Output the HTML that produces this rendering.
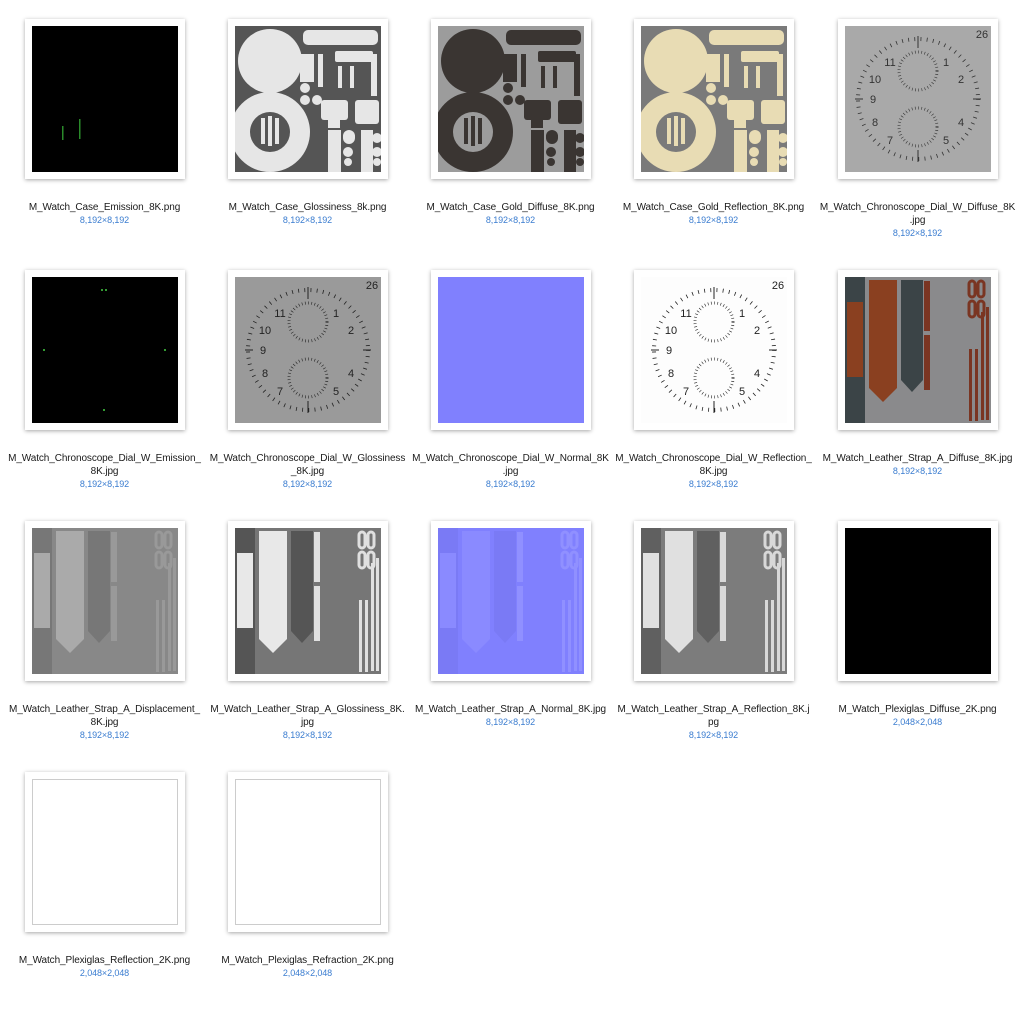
<!DOCTYPE html>
<html><head><meta charset="utf-8"><style>
body{margin:0;width:1024px;height:1024px;background:#fff;position:relative;overflow:hidden;font-family:"Liberation Sans",sans-serif}
.f{position:absolute;width:160px;height:160px;background:#fff;box-shadow:0 1px 4px rgba(0,0,0,.35)}
.f svg{position:absolute;left:7px;top:7px;width:146px;height:146px;display:block}
.l{position:absolute;width:203px;text-align:center;font-size:10px;line-height:13px;color:#1a1a1a;letter-spacing:-0.1px}
.l span{display:block;color:#3b7dd0;font-size:9px;line-height:12px}
</style></head><body>
<svg width="0" height="0" style="position:absolute">
<defs>
<symbol id="case" viewBox="0 0 146 146">
<circle cx="35" cy="35" r="32"/>
<path fill-rule="evenodd" d="M-5,106a40,40 0 1,0 80,0a40,40 0 1,0 -80,0zM15,106a20,20 0 1,0 40,0a20,20 0 1,0 -40,0z"/>
<rect x="26" y="92" width="4" height="26"/><rect x="33" y="90" width="4" height="30"/><rect x="40" y="92" width="4" height="26"/>
<rect x="68" y="4" width="75" height="15" rx="5"/><rect x="100" y="25" width="38" height="11" rx="2"/>
<rect x="65" y="28" width="14" height="28"/><rect x="83" y="28" width="5" height="33"/>
<circle cx="70" cy="62" r="5"/><circle cx="70" cy="74" r="5"/><circle cx="82" cy="74" r="5"/>
<rect x="115" y="40" width="4" height="22"/><rect x="103" y="40" width="4" height="22"/>
<rect x="136" y="28" width="6" height="42"/>
<rect x="86" y="74" width="27" height="20" rx="3"/><rect x="93" y="90" width="12" height="12"/>
<rect x="120" y="74" width="24" height="24" rx="3"/>
<rect x="93" y="104" width="13" height="42"/><rect x="108" y="104" width="12" height="14" rx="6"/><circle cx="113" cy="126" r="5"/><circle cx="113" cy="136" r="4"/>
<rect x="126" y="104" width="12" height="42"/><circle cx="142" cy="112" r="5"/><circle cx="142" cy="126" r="5"/><circle cx="142" cy="136" r="4"/>
</symbol>
<symbol id="strap" viewBox="0 0 146 146">
<rect x="0" y="0" width="20" height="146" fill="var(--a)"/>
<rect x="2" y="25" width="16" height="75" fill="var(--b)"/>
<path d="M24,3h28v108l-14,14l-14,-14z" fill="var(--b)"/>
<path d="M56,3h22v100l-11,12l-11,-12z" fill="var(--a)"/>
<rect x="79" y="4" width="6" height="50" fill="var(--c)"/><rect x="79" y="58" width="6" height="55" fill="var(--c)"/>
<g fill="none" stroke="var(--c)" stroke-width="3"><rect x="124" y="4" width="6" height="16" rx="3"/><rect x="133" y="4" width="6" height="16" rx="3"/><rect x="124" y="24" width="6" height="16" rx="3"/><rect x="133" y="24" width="6" height="16" rx="3"/></g>
<g fill="var(--c)"><rect x="141" y="30" width="3" height="113"/><rect x="136" y="35" width="3" height="108"/><rect x="130" y="72" width="3" height="72"/><rect x="124" y="72" width="3" height="72"/></g>
</symbol>
<symbol id="dial" viewBox="0 0 146 146">
<g fill="none" stroke="var(--d)">
<circle cx="73" cy="73" r="60" stroke-width="4" stroke-dasharray="0.8 5.4"/>
<circle cx="73" cy="45" r="19" stroke-width="3" stroke-dasharray="0.6 2.6"/>
<circle cx="73" cy="101" r="19" stroke-width="3" stroke-dasharray="0.6 2.6"/>
<path d="M73,10v12M73,124v12M10,73h8M128,73h8" stroke-width="1"/>
</g>
<g fill="var(--d)" font-family="Liberation Sans,sans-serif" font-size="11" text-anchor="middle">
<text x="45" y="40">11</text><text x="101" y="40">1</text><text x="30" y="57">10</text><text x="116" y="57">2</text>
<text x="28" y="77">9</text><text x="30" y="100">8</text><text x="116" y="100">4</text><text x="45" y="118">7</text><text x="101" y="118">5</text>
<text x="137" y="12">26</text>
</g>
</symbol>
</defs></svg>

<div class="f" style="left:25px;top:19px"><svg><rect width="146" height="146" fill="#000"/><rect x="30" y="100" width="1.5" height="14" fill="#2a8a2a"/><rect x="47" y="93" width="1.5" height="20" fill="#2a8a2a"/></svg></div>
<div class="f" style="left:228px;top:19px"><svg viewBox="0 0 146 146"><rect width="146" height="146" fill="#555"/><use href="#case" fill="#e6e6e6"/></svg></div>
<div class="f" style="left:431px;top:19px"><svg viewBox="0 0 146 146"><rect width="146" height="146" fill="#9c9c9c"/><use href="#case" fill="#3a3532"/></svg></div>
<div class="f" style="left:634px;top:19px"><svg viewBox="0 0 146 146"><rect width="146" height="146" fill="#7a7a7a"/><use href="#case" fill="#e8dcb4"/></svg></div>
<div class="f" style="left:838px;top:19px"><svg viewBox="0 0 146 146" style="--d:#333"><rect width="146" height="146" fill="#a9a9a9"/><use href="#dial"/></svg></div>

<div class="l" style="left:3px;top:201px">M_Watch_Case_Emission_8K.png<span>8,192×8,192</span></div>
<div class="l" style="left:206px;top:201px">M_Watch_Case_Glossiness_8k.png<span>8,192×8,192</span></div>
<div class="l" style="left:409px;top:201px">M_Watch_Case_Gold_Diffuse_8K.png<span>8,192×8,192</span></div>
<div class="l" style="left:612px;top:201px">M_Watch_Case_Gold_Reflection_8K.png<span>8,192×8,192</span></div>
<div class="l" style="left:816px;top:201px">M_Watch_Chronoscope_Dial_W_Diffuse_8K<br>.jpg<span>8,192×8,192</span></div>

<div class="f" style="left:25px;top:270px"><svg><rect width="146" height="146" fill="#000"/><g fill="#4c4"><circle cx="70" cy="13" r="1"/><circle cx="74" cy="13" r="1"/><circle cx="12" cy="73" r="1"/><circle cx="133" cy="73" r="1"/><circle cx="72" cy="133" r="1"/></g></svg></div>
<div class="f" style="left:228px;top:270px"><svg viewBox="0 0 146 146" style="--d:#222"><rect width="146" height="146" fill="#9a9a9a"/><use href="#dial"/></svg></div>
<div class="f" style="left:431px;top:270px"><svg><rect width="146" height="146" fill="#8080fe"/></svg></div>
<div class="f" style="left:634px;top:270px"><svg viewBox="0 0 146 146" style="--d:#222"><rect width="146" height="146" fill="#fdfdfd"/><use href="#dial"/></svg></div>
<div class="f" style="left:838px;top:270px"><svg viewBox="0 0 146 146" style="--a:#3b4447;--b:#8a4020;--c:#7a3522"><rect width="146" height="146" fill="#8a8a8c"/><use href="#strap"/></svg></div>

<div class="l" style="left:3px;top:452px">M_Watch_Chronoscope_Dial_W_Emission_<br>8K.jpg<span>8,192×8,192</span></div>
<div class="l" style="left:206px;top:452px">M_Watch_Chronoscope_Dial_W_Glossiness<br>_8K.jpg<span>8,192×8,192</span></div>
<div class="l" style="left:409px;top:452px">M_Watch_Chronoscope_Dial_W_Normal_8K<br>.jpg<span>8,192×8,192</span></div>
<div class="l" style="left:612px;top:452px">M_Watch_Chronoscope_Dial_W_Reflection_<br>8K.jpg<span>8,192×8,192</span></div>
<div class="l" style="left:816px;top:452px">M_Watch_Leather_Strap_A_Diffuse_8K.jpg<span>8,192×8,192</span></div>

<div class="f" style="left:25px;top:521px"><svg viewBox="0 0 146 146" style="--a:#777;--b:#aaa;--c:#999"><rect width="146" height="146" fill="#888"/><use href="#strap"/></svg></div>
<div class="f" style="left:228px;top:521px"><svg viewBox="0 0 146 146" style="--a:#555;--b:#e8e8e8;--c:#e0e0e0"><rect width="146" height="146" fill="#767676"/><use href="#strap"/></svg></div>
<div class="f" style="left:431px;top:521px"><svg viewBox="0 0 146 146" style="--a:#7a7af5;--b:#8a8aff;--c:#9090ff"><rect width="146" height="146" fill="#8080fe"/><use href="#strap"/></svg></div>
<div class="f" style="left:634px;top:521px"><svg viewBox="0 0 146 146" style="--a:#606060;--b:#e0e0e0;--c:#d8d8d8"><rect width="146" height="146" fill="#7c7c7c"/><use href="#strap"/></svg></div>
<div class="f" style="left:838px;top:521px"><svg><rect width="146" height="146" fill="#000"/></svg></div>

<div class="l" style="left:3px;top:703px">M_Watch_Leather_Strap_A_Displacement_<br>8K.jpg<span>8,192×8,192</span></div>
<div class="l" style="left:206px;top:703px">M_Watch_Leather_Strap_A_Glossiness_8K.<br>jpg<span>8,192×8,192</span></div>
<div class="l" style="left:409px;top:703px">M_Watch_Leather_Strap_A_Normal_8K.jpg<span>8,192×8,192</span></div>
<div class="l" style="left:612px;top:703px">M_Watch_Leather_Strap_A_Reflection_8K.j<br>pg<span>8,192×8,192</span></div>
<div class="l" style="left:816px;top:703px">M_Watch_Plexiglas_Diffuse_2K.png<span>2,048×2,048</span></div>

<div class="f" style="left:25px;top:772px"><svg><rect x="0.5" y="0.5" width="145" height="145" fill="#fff" stroke="#ccc"/></svg></div>
<div class="f" style="left:228px;top:772px"><svg><rect x="0.5" y="0.5" width="145" height="145" fill="#fff" stroke="#ccc"/></svg></div>

<div class="l" style="left:3px;top:954px">M_Watch_Plexiglas_Reflection_2K.png<span>2,048×2,048</span></div>
<div class="l" style="left:206px;top:954px">M_Watch_Plexiglas_Refraction_2K.png<span>2,048×2,048</span></div>
</body></html>
